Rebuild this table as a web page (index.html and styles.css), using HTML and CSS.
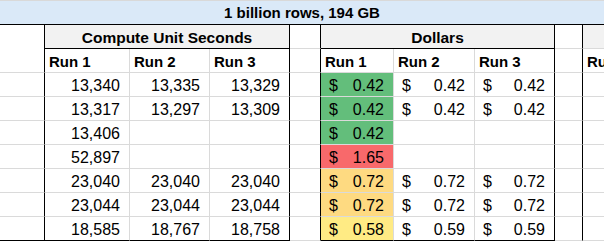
FILE: index.html
```html
<!DOCTYPE html>
<html>
<head>
<meta charset="utf-8">
<link rel="stylesheet" href="styles.css">
</head>
<body>
<div class="sheet">
  <div class="title">1 billion rows, 194 GB</div>

  <div class="c a hdr-a"></div>
  <div class="c sec sec-b">Compute Unit Seconds</div>
  <div class="c gap hdr-gap"></div>
  <div class="c sec sec-f">Dollars</div>
  <div class="c gap hdr-gap"></div>
  <div class="c sec sec-j"></div>

  <div class="c b run">Run 1</div>
  <div class="c run">Run 2</div>
  <div class="c edge run">Run 3</div>
  <div class="c gap"></div>
  <div class="c run">Run 1</div>
  <div class="c run">Run 2</div>
  <div class="c edge run">Run 3</div>
  <div class="c gap"></div>
  <div class="c run">Run 1</div>

  <!-- row 1 -->
  <div class="c a"></div>
  <div class="c num">13,340</div>
  <div class="c num">13,335</div>
  <div class="c num edge">13,329</div>
  <div class="c gap"></div>
  <div class="c usd green"><span>$</span><span>0.42</span></div>
  <div class="c usd"><span>$</span><span>0.42</span></div>
  <div class="c usd edge"><span>$</span><span>0.42</span></div>
  <div class="c gap"></div>
  <div class="c"></div>

  <!-- row 2 -->
  <div class="c a"></div>
  <div class="c num">13,317</div>
  <div class="c num">13,297</div>
  <div class="c num edge">13,309</div>
  <div class="c gap"></div>
  <div class="c usd green"><span>$</span><span>0.42</span></div>
  <div class="c usd"><span>$</span><span>0.42</span></div>
  <div class="c usd edge"><span>$</span><span>0.42</span></div>
  <div class="c gap"></div>
  <div class="c"></div>

  <!-- row 3 -->
  <div class="c a"></div>
  <div class="c num">13,406</div>
  <div class="c num"></div>
  <div class="c num edge"></div>
  <div class="c gap"></div>
  <div class="c usd green"><span>$</span><span>0.42</span></div>
  <div class="c usd"></div>
  <div class="c usd edge"></div>
  <div class="c gap"></div>
  <div class="c"></div>

  <!-- row 4 -->
  <div class="c a"></div>
  <div class="c num">52,897</div>
  <div class="c num"></div>
  <div class="c num edge"></div>
  <div class="c gap"></div>
  <div class="c usd red"><span>$</span><span>1.65</span></div>
  <div class="c usd"></div>
  <div class="c usd edge"></div>
  <div class="c gap"></div>
  <div class="c"></div>

  <!-- row 5 -->
  <div class="c a"></div>
  <div class="c num">23,040</div>
  <div class="c num">23,040</div>
  <div class="c num edge">23,040</div>
  <div class="c gap"></div>
  <div class="c usd orange"><span>$</span><span>0.72</span></div>
  <div class="c usd"><span>$</span><span>0.72</span></div>
  <div class="c usd edge"><span>$</span><span>0.72</span></div>
  <div class="c gap"></div>
  <div class="c"></div>

  <!-- row 6 -->
  <div class="c a"></div>
  <div class="c num">23,044</div>
  <div class="c num">23,044</div>
  <div class="c num edge">23,044</div>
  <div class="c gap"></div>
  <div class="c usd orange"><span>$</span><span>0.72</span></div>
  <div class="c usd"><span>$</span><span>0.72</span></div>
  <div class="c usd edge"><span>$</span><span>0.72</span></div>
  <div class="c gap"></div>
  <div class="c"></div>

  <!-- row 7 -->
  <div class="c a last"></div>
  <div class="c num last">18,585</div>
  <div class="c num last">18,767</div>
  <div class="c num edge last">18,758</div>
  <div class="c gap"></div>
  <div class="c usd yellow last"><span>$</span><span>0.58</span></div>
  <div class="c usd last"><span>$</span><span>0.59</span></div>
  <div class="c usd edge last"><span>$</span><span>0.59</span></div>
  <div class="c gap"></div>
  <div class="c"></div>
</div>
</body>
</html>
```
FILE: styles.css
```css
html, body {
  margin: 0;
  padding: 0;
  background: #fff;
  overflow: hidden;
}

.sheet {
  width: 640px;
  display: grid;
  grid-template-columns: 45px 85px 80px 80px 31px 73px 81px 80px 28px 57px;
  grid-auto-rows: 24px;
  border-top: 1px solid #d9d9d9;
  font-family: "Liberation Sans", Arial, sans-serif;
  font-size: 15px;
  color: #000;
}

.title {
  grid-column: 1 / -1;
  background: #dae9f8;
  border-bottom: 1px solid #000;
  font-weight: bold;
  text-align: center;
  line-height: 18px;
  padding-top: 3px;
  box-sizing: border-box;
  height: 24px;
  width: 604px;
}

.c {
  box-sizing: border-box;
  border-right: 1px solid #dadada;
  border-bottom: 1px solid #dadada;
  display: flex;
  align-items: flex-end;
  line-height: 18px;
  padding-bottom: 1px;
  white-space: nowrap;
  overflow: hidden;
}

.a {
  border-right-color: #000;
}

.hdr-a {
  grid-row: span 2;
}

.sec {
  grid-column: span 3;
  background: #f2f2f2;
  font-weight: bold;
  font-size: 15.5px;
  justify-content: center;
  border-right-color: #000;
  border-bottom-color: #000;
}

.sec-j {
  grid-column: span 1;
  border-right-color: #dadada;
  border-bottom-color: #dadada;
}

.gap {
  border-right-color: #000;
}

.edge {
  border-right-color: #000;
}

.run {
  font-weight: bold;
  padding-left: 4px;
}

.num {
  font-size: 16px;
  justify-content: flex-end;
  padding-right: 9px;
}

.usd {
  font-size: 16px;
  justify-content: space-between;
  padding-left: 8px;
  padding-right: 9px;
}

.last {
  border-bottom-color: #000;
}

.green { background: #63be7b; }
.red { background: #f8696b; }
.orange { background: #feda81; }
.yellow { background: #ffeb84; }
```
